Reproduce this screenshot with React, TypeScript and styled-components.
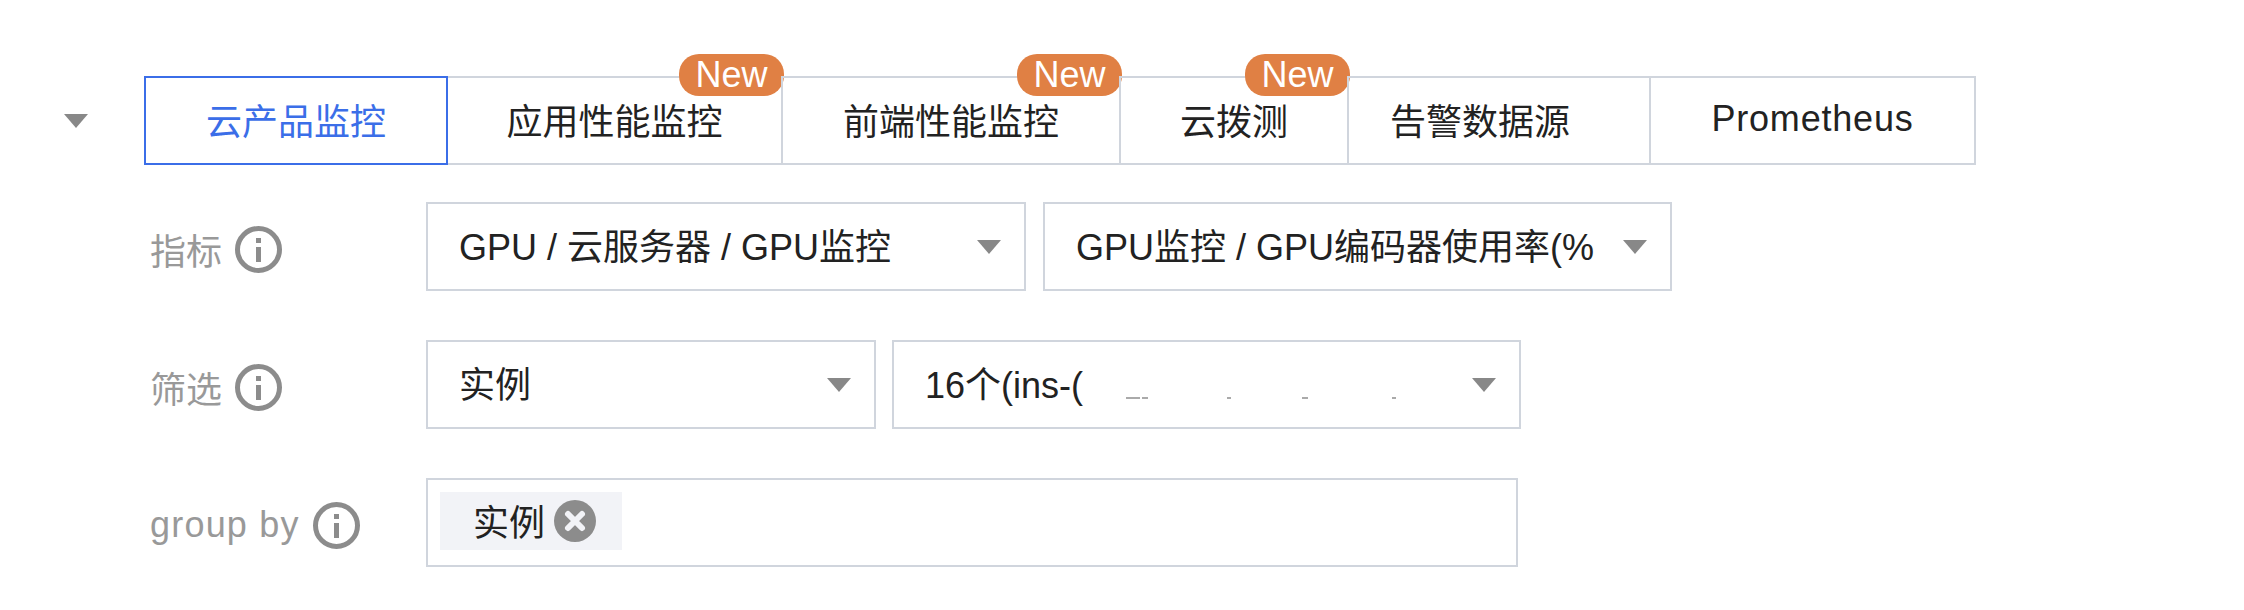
import styled, { createGlobalStyle } from "styled-components";

const GlobalStyle = createGlobalStyle`
  html, body {
    margin: 0;
    padding: 0;
    background: #fff;
  }
`;

const fontStack = `"Liberation Sans", "Noto Sans CJK SC", sans-serif`;

const Page = styled.div`
  width: 2244px;
  height: 610px;
  box-sizing: border-box;
  padding: 76px 0 0 64px;
  font-family: ${fontStack};
  font-size: 36px;
  color: #222;
  overflow: hidden;
`;

const TabRow = styled.div`
  display: flex;
  align-items: center;
`;

const Caret = styled.span`
  width: 0;
  height: 0;
  flex: none;
  border-left: 12px solid transparent;
  border-right: 12px solid transparent;
  border-top: 14px solid #888;
`;

const CollapseCaret = styled(Caret)`
  margin-right: 58px;
`;

const Tabs = styled.div`
  display: flex;
`;

const Tab = styled.div<{ $width: number; $active?: boolean; $nudge?: number; $spacing?: number }>`
  position: relative;
  box-sizing: border-box;
  width: ${(p) => p.$width}px;
  height: 89px;
  display: flex;
  align-items: center;
  justify-content: center;
  margin-left: -2px;
  padding-right: ${(p) => p.$nudge ?? 0}px;
  padding-bottom: 3px;
  border: 2px solid ${(p) => (p.$active ? "#3b6ee8" : "#d0d5dd")};
  color: ${(p) => (p.$active ? "#3b6ee8" : "#222")};
  letter-spacing: ${(p) => p.$spacing ?? 0}px;
  z-index: ${(p) => (p.$active ? 1 : 0)};
`;

const Badge = styled.span`
  position: absolute;
  top: -24px;
  right: -3px;
  width: 105px;
  height: 42px;
  border-radius: 20px;
  background: #e08044;
  color: #fff;
  font-size: 36px;
  line-height: 42px;
  text-align: center;
`;

const Form = styled.div`
  display: flex;
  flex-direction: column;
  gap: 49px;
  margin: 37px 0 0 86px;
`;

const FormRow = styled.div`
  display: flex;
  align-items: center;
`;

const Label = styled.div<{ $spacing?: number }>`
  width: 276px;
  flex: none;
  box-sizing: border-box;
  padding-top: 5px;
  display: flex;
  align-items: center;
  gap: 13px;
  color: #999;
  letter-spacing: ${(p) => p.$spacing ?? 0}px;
`;

const InfoIcon = styled.svg`
  width: 47px;
  height: 47px;
  flex: none;
`;

const Controls = styled.div<{ $gap: number }>`
  display: flex;
  gap: ${(p) => p.$gap}px;
`;

const Select = styled.div<{ $width: number }>`
  box-sizing: border-box;
  width: ${(p) => p.$width}px;
  height: 89px;
  border: 2px solid #d0d5dd;
  padding: 0 23px 0 31px;
  display: flex;
  align-items: center;
  justify-content: space-between;
`;

const SelectValue = styled.span`
  position: relative;
  white-space: nowrap;
  margin-bottom: 6px;
`;

const Redaction = styled.span`
  display: inline-block;
  width: 300px;
`;

const Speck = styled.i<{ $left: number; $width: number }>`
  position: absolute;
  left: ${(p) => p.$left}px;
  top: 41px;
  width: ${(p) => p.$width}px;
  height: 2px;
  background: #aaa;
`;

const TagBox = styled.div`
  box-sizing: border-box;
  width: 1092px;
  height: 89px;
  border: 2px solid #d0d5dd;
  padding: 12px;
  display: flex;
  align-items: flex-start;
`;

const Tag = styled.div`
  box-sizing: border-box;
  width: 182px;
  height: 58px;
  background: #f2f3f7;
  padding-left: 33px;
  display: flex;
  align-items: center;
  gap: 9px;
`;

const TagText = styled.span`
  margin-bottom: 3px;
`;

const ClearIcon = styled.svg`
  width: 42px;
  height: 42px;
  flex: none;
`;

const Info = () => (
  <InfoIcon viewBox="0 0 47 47">
    <circle cx="23.5" cy="23.5" r="21" fill="none" stroke="#8c8c8c" strokeWidth="5" />
    <rect x="21" y="12" width="5" height="5" fill="#8c8c8c" />
    <rect x="21" y="21" width="5" height="15" fill="#8c8c8c" />
  </InfoIcon>
);

const tabs = [
  { name: "云产品监控", width: 304, active: true },
  { name: "应用性能监控", width: 337, isNew: true },
  { name: "前端性能监控", width: 340, isNew: true },
  { name: "云拨测", width: 230, isNew: true },
  { name: "告警数据源", width: 304, nudge: 38 },
  { name: "Prometheus", width: 327, spacing: 0.8 },
];

const App = () => (
  <Page>
    <GlobalStyle />
    <TabRow>
      <CollapseCaret />
      <Tabs>
        {tabs.map((t) => (
          <Tab key={t.name} $width={t.width} $active={t.active} $nudge={t.nudge} $spacing={t.spacing}>
            {t.name}
            {t.isNew && <Badge>New</Badge>}
          </Tab>
        ))}
      </Tabs>
    </TabRow>
    <Form>
      <FormRow>
        <Label>
          指标
          <Info />
        </Label>
        <Controls $gap={17}>
          <Select $width={600}>
            <SelectValue>GPU / 云服务器 / GPU监控</SelectValue>
            <Caret />
          </Select>
          <Select $width={629}>
            <SelectValue>GPU监控 / GPU编码器使用率(%</SelectValue>
            <Caret />
          </Select>
        </Controls>
      </FormRow>
      <FormRow>
        <Label>
          筛选
          <Info />
        </Label>
        <Controls $gap={16}>
          <Select $width={450}>
            <SelectValue>实例</SelectValue>
            <Caret />
          </Select>
          <Select $width={629}>
            <SelectValue>
              16个(ins-(
              <Redaction />
              <Speck $left={201} $width={14} />
              <Speck $left={217} $width={6} />
              <Speck $left={302} $width={4} />
              <Speck $left={377} $width={6} />
              <Speck $left={467} $width={4} />
            </SelectValue>
            <Caret />
          </Select>
        </Controls>
      </FormRow>
      <FormRow>
        <Label $spacing={1.2}>
          group by
          <Info />
        </Label>
        <TagBox>
          <Tag>
            <TagText>实例</TagText>
            <ClearIcon viewBox="0 0 42 42">
              <circle cx="21" cy="21" r="21" fill="#8c8c8c" />
              <path d="M14 14 L28 28 M28 14 L14 28" stroke="#f2f3f7" strokeWidth="6" strokeLinecap="round" />
            </ClearIcon>
          </Tag>
        </TagBox>
      </FormRow>
    </Form>
  </Page>
);

export default App;
